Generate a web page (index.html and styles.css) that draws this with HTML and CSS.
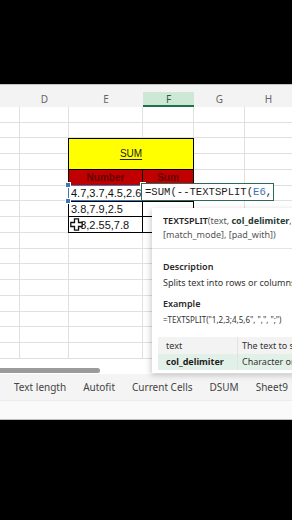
FILE: index.html
```html
<!DOCTYPE html>
<html lang="en">
    <head>
        <meta charset="UTF-8" />
        <meta name="viewport" content="width=device-width, initial-scale=1.0" />
        <title>TEXTSPLIT sum</title>

        <link rel="stylesheet" href="styles.css">
    </head>
    <body>
        <div class="letterbox top"></div>

        <div class="sheet">
            <div class="col-heads">
                <div class="head corner"></div>
                <div class="head">D</div>
                <div class="head">E</div>
                <div class="head active">F</div>
                <div class="head">G</div>
                <div class="head last">H</div>
            </div>

            <div class="grid">
                <div class="col c1"></div>
                <div class="col c2"></div>
                <div class="col c3"></div>
                <div class="col c4"></div>
                <div class="col c5"></div>

                <div class="cell title"><u>SUM</u></div>
                <div class="cell label first r5">Number</div>
                <div class="cell label r5">Sum</div>

                <div class="cell data first r6">4.7,3.7,4.5,2.6</div>
                <div class="cell data r6"></div>
                <div class="cell data first r7">3.8,7.9,2.5</div>
                <div class="cell data r7"></div>
                <div class="cell data first r8">4.3,2.55,7.8</div>
                <div class="cell data r8"></div>
            </div>

            <div class="scroll"><div class="thumb"></div></div>

            <div class="tabs">
                <span>Text length</span>
                <span>Autofit</span>
                <span>Current Cells</span>
                <span>DSUM</span>
                <span>Sheet9</span>
            </div>
            <div class="status"></div>

            <!-- things lying over the grid -->
            <div class="selection">
                <i class="handle tl"></i>
                <i class="handle tr"></i>
                <i class="handle bl"></i>
            </div>

            <svg class="cursor" width="13" height="13" viewBox="0 0 13 13">
                <path d="M4.5 0.8h4v3.7h3.7v4h-3.7v3.7h-4v-3.7h-3.7v-4h3.7z"
                      fill="#fff" stroke="#111" stroke-width="1.3" />
            </svg>

            <div class="editor">=SUM(--TEXTSPLIT(<span class="ref">E6</span>,</div>

            <div class="tip">
                <div class="sig">
                    <p><b>TEXTSPLIT</b>(text, <b class="arg">col_delimiter</b>, [row_delimiter], [ignore_empty],</p>
                    <p>[match_mode], [pad_with])</p>
                </div>
                <div class="tip-body">
                    <h4>Description</h4>
                    <p>Splits text into rows or columns using delimiters.</p>
                    <h4>Example</h4>
                    <p class="ex">=TEXTSPLIT("1,2,3;4,5,6", ",", ";")</p>
                    <table class="args">
                        <tr>
                            <td>text</td>
                            <td>The text to split.</td>
                        </tr>
                        <tr class="cur">
                            <td>col_delimiter</td>
                            <td>Character or string to split by.</td>
                        </tr>
                    </table>
                </div>
            </div>
        </div>

        <div class="letterbox bottom"></div>
    </body>
</html>
```

FILE: styles.css
```css
html,
body {
    margin: 0;
    padding: 0;
}
body {
    width: 292px;
    height: 520px;
    overflow: hidden;
    background: #000;
    font-family: 'Liberation Sans', Arial, sans-serif;
}

.letterbox.top {
    height: 84px;
}

.sheet {
    position: relative;
    background: #fff;
    border-left: 1px solid #4a4a4a;
    margin-left: -1px;
}

/* column letters */
.col-heads {
    display: grid;
    grid-template-columns: 20px 49px 74px 51px 51px 1fr;
    height: 23px;
    padding-top: 0;
    background: #f3f3f3;
    border-top: 1px solid #c4c4c4;
    box-sizing: border-box;
}
.head {
    align-self: end;
    height: 15px;
    line-height: 15px;
    text-align: center;
    font-family: 'Noto Sans', sans-serif;
    font-size: 10px;
    color: #666;
}
.head.active {
    background: #cde8d5;
    color: #2f5c44;
    height: 13px;
    border-bottom: 2px solid #217346;
}

/* cells */
.grid {
    display: grid;
    grid-template-columns: 20px 49px 74px 51px 51px 1fr;
    grid-template-rows: repeat(16, 15.75px);
    background: repeating-linear-gradient(
        to bottom,
        #fff 0 14.75px,
        #e0e0e0 14.75px 15.75px
    );
}
.col {
    grid-row: 1 / -1;
    border-right: 1px solid #e0e0e0;
}
.c1 { grid-column: 1; }
.c2 { grid-column: 2; }
.c3 { grid-column: 3; }
.c4 { grid-column: 4; }
.c5 { grid-column: 5; }

.cell {
    grid-column: 4;
    display: flex;
    align-items: center;
    border-right: 1px solid #000;
    border-bottom: 1px solid #000;
    color: #111;
    white-space: nowrap;
    overflow: hidden;
}
.cell.first {
    grid-column: 3;
    margin-left: -1px;
    border-left: 1px solid #000;
}
.r5 { grid-row: 5; }
.r6 { grid-row: 6; }
.r7 { grid-row: 7; }
.r8 { grid-row: 8; }

.title {
    grid-column: 3 / 5;
    grid-row: 3 / 5;
    margin: -1px 0 0 -1px;
    border: 1px solid #000;
    background: #ffff00;
    justify-content: center;
    font-size: 10px;
    color: #222;
}
.title u {
    text-underline-offset: 2px;
}
.label {
    justify-content: center;
    background: #c00000;
    color: #650000;
    font-size: 10px;
    font-weight: bold;
}
.data {
    background: #fff;
    font-size: 11px;
    padding-left: 2px;
}

.scroll {
    height: 15px;
    padding-top: 9px;
    box-sizing: border-box;
}
.thumb {
    width: 100px;
    height: 5px;
    border-radius: 0 3px 3px 0;
    background: #9b9b9b;
}

.tabs {
    display: flex;
    gap: 17px;
    height: 26px;
    align-items: center;
    padding-left: 14px;
    background: #f4f4f4;
    font-family: 'Noto Sans', sans-serif;
    font-size: 10px;
    color: #444;
    white-space: nowrap;
}
.status {
    height: 18px;
    background: #fafafa;
    border-top: 1px solid #ececec;
    border-bottom: 1px solid #bdbdbd;
}

/* overlays */
.selection {
    position: absolute;
    left: 68px;
    top: 101px;
    width: 73px;
    height: 14px;
    border: 1.5px solid #3a78b6;
}
.handle {
    position: absolute;
    width: 4px;
    height: 4px;
    background: #3a78b6;
    border: 1px solid #fff;
}
.handle.tl { left: -4px; top: -4px; }
.handle.tr { right: -4px; top: -4px; }
.handle.bl { left: -4px; bottom: -4px; }

.cursor {
    position: absolute;
    left: 70px;
    top: 134px;
}

.editor {
    position: absolute;
    left: 141px;
    top: 99px;
    width: 128px;
    height: 16px;
    padding-left: 3px;
    border: 1.5px solid #2d6a5b;
    background: #fff;
    font-family: 'Liberation Mono', monospace;
    font-size: 10.6px;
    line-height: 16px;
    color: #1b1b1b;
    white-space: nowrap;
}
.editor .ref {
    color: #3c70b4;
}

.tip {
    position: absolute;
    left: 152px;
    top: 124px;
    width: 260px;
    height: 165px;
    background: #fff;
    box-shadow: -1px 2px 6px rgba(0, 0, 0, 0.22);
    font-family: 'Noto Sans', sans-serif;
    color: #333;
    white-space: nowrap;
    overflow: hidden;
}
.tip p,
.tip h4 {
    margin: 0;
}
.sig {
    padding: 6px 11px 6px;
    border-bottom: 1px solid #e4e4e4;
    font-size: 9px;
    line-height: 14px;
    color: #555;
}
.sig b {
    color: #222;
    font-weight: 600;
}
.sig .arg {
    color: #1f3b33;
    font-weight: bold;
}
.tip-body {
    padding: 11px 11px 0;
}
.tip-body h4 {
    font-size: 9px;
    font-weight: 600;
    line-height: 14px;
    color: #2a2a2a;
}
.tip-body p {
    font-size: 9px;
    line-height: 14px;
}
.tip-body h4 + p {
    margin-top: 2px;
}
.tip-body p + h4 {
    margin-top: 7px;
}
.tip-body .ex {
    font-size: 8px;
    line-height: 14px;
    margin-top: 2px;
}
.args {
    margin: 10px 0 0 -5px;
    border-collapse: collapse;
    font-size: 9px;
}
.args td {
    height: 16.5px;
    padding: 0 0 0 8px;
    background: #f3f3f3;
}
.args td:first-child {
    width: 71px;
    border-right: 1px solid #e2e2e2;
}
.args td + td {
    padding-left: 4px;
}
.args .cur td {
    background: #e2f1e7;
}
.args .cur td:first-child {
    font-weight: bold;
    color: #1d1d1d;
}
```
